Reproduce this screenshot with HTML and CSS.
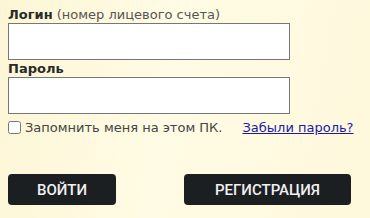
FILE: index.html
```html
<!DOCTYPE html>
<html lang="ru">
<head>
    <meta charset="UTF-8">
    <title>Вход</title>
    <link rel="stylesheet" href="styles.css">
</head>
<body>
    <form class="login-form">
        <label class="field-label" for="login"><b>Логин</b> (номер лицевого счета)</label>
        <input type="text" id="login" class="field">
        <label class="field-label" for="password"><b>Пароль</b></label>
        <input type="password" id="password" class="field">
        <div class="remember-row">
            <label class="remember"><input type="checkbox" class="check">Запомнить меня на этом ПК.</label>
            <a href="#" class="forgot">Забыли пароль?</a>
        </div>
        <div class="buttons">
            <button type="submit" class="btn btn-login">Войти</button>
            <button type="button" class="btn btn-register">Регистрация</button>
        </div>
    </form>
</body>
</html>
```

FILE: styles.css
```css
html, body {
    height: 100%;
}
body {
    margin: 0;
    padding: 6px 8px 0;
    box-sizing: border-box;
    font-family: "DejaVu Sans", Verdana, sans-serif;
    font-size: 13px;
    color: #444;
    background: linear-gradient(100deg, #fdf6d6 0%, #fffbe4 45%, #fef8dc 100%);
}
.login-form {
    display: flex;
    flex-direction: column;
    align-items: flex-start;
}
.field-label {
    display: block;
    line-height: 17px;
    color: #555;
}
.field-label b {
    color: #2a2a2a;
}
.field {
    box-sizing: border-box;
    width: 282px;
    height: 37px;
    margin: 0;
    border: 1px solid #777;
    background: #fff;
    padding: 4px 6px;
    font-size: 13px;
}
.remember-row {
    display: flex;
    align-items: center;
    margin-top: 5px;
    line-height: 17px;
}
.remember {
    display: flex;
    align-items: center;
    color: #444;
}
.check {
    width: 13px;
    height: 13px;
    margin: 0 4px 0 0;
}
.forgot {
    margin-left: 20px;
    color: #1a1aa6;
}
.buttons {
    display: flex;
    gap: 68px;
    margin-top: 38px;
}
.btn {
    height: 31px;
    border: none;
    border-radius: 4px;
    background: #1c1f22;
    color: #f0f0f0;
    font-family: Roboto, "Liberation Sans", sans-serif;
    font-weight: 500;
    font-size: 15px;
    text-transform: uppercase;
    cursor: pointer;
}
.btn-login {
    width: 108px;
}
.btn-register {
    width: 167px;
}
```
